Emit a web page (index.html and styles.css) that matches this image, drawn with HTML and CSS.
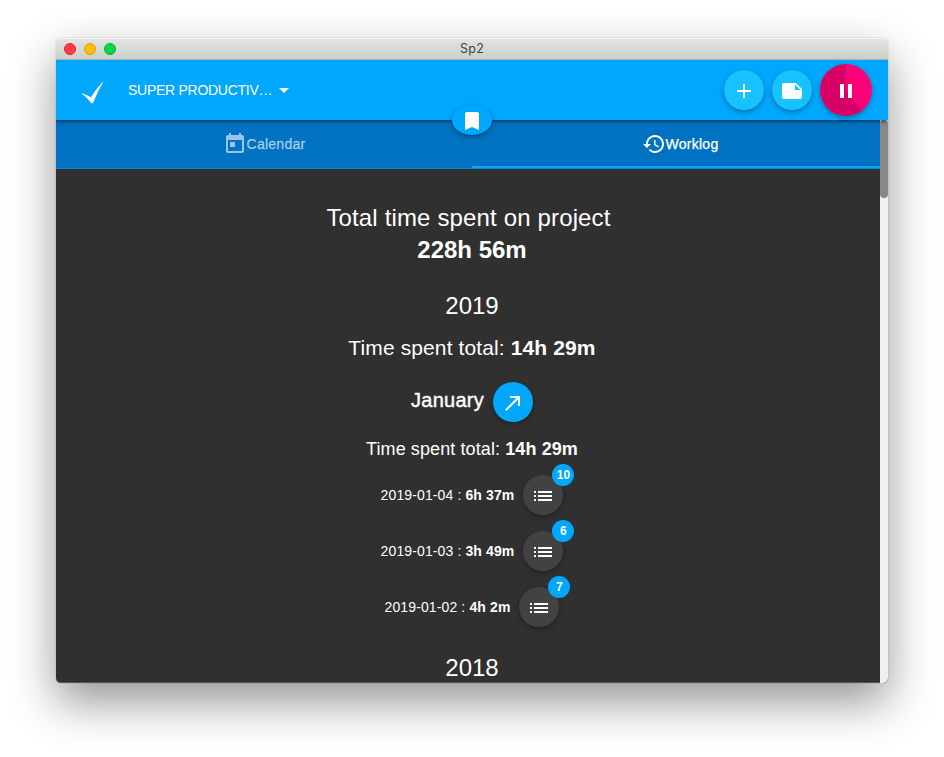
FILE: index.html
```html
<!DOCTYPE html>
<html lang="en">
<head>
<meta charset="utf-8">
<title>Sp2</title>
<link rel="stylesheet" href="styles.css">
</head>
<body>
<div class="window">
  <div class="titlebar">
    <div class="lights"><i class="light red"></i><i class="light yellow"></i><i class="light green"></i></div>
    <span class="window-title">Sp2</span>
  </div>
  <header class="header">
    <svg class="logo" viewBox="0 0 24 24"><path d="M.7 12.800Q6 14.500 11 17.200Q16.500 8 23.700.700Q18 11 12.900 23.200H11.400Q6.500 16.500.700 12.800Z"/></svg>
    <button class="project"><span>SUPER PRODUCTIV…</span><i class="caret"></i></button>
    <div class="actions">
      <button class="fab light-blue"><svg class="icon" viewBox="0 0 24 24"><path d="M19 13h-6v6h-2v-6H5v-2h6V5h2v6h6v2z"/></svg></button>
      <button class="fab light-blue"><svg class="icon" viewBox="0 0 24 24"><path d="M22 10l-6-6H4c-1.100 0-2 .900-2 2v12.010c0 1.100.900 1.990 2 1.990l16-.010c1.100 0 2-.890 2-1.990v-8zm-7-4.500l5.500 5.500H15V5.500z"/></svg></button>
      <button class="fab pause"><svg class="icon" viewBox="0 0 24 24"><path d="M6 19h4V5H6v14zm8-14v14h4V5h-4z"/></svg></button>
    </div>
    <button class="bookmark"><svg class="icon" viewBox="0 0 24 24"><path d="M17 3H7c-1.100 0-1.990.900-1.990 2L5 21l7-3 7 3V5c0-1.100-.900-2-2-2z"/></svg></button>
  </header>
  <div class="page">
    <nav class="tabs">
      <a class="tab"><svg class="icon" viewBox="0 0 24 24"><path d="M19 3h-1V1h-2v2H8V1H6v2H5c-1.110 0-1.990.900-1.990 2L3 19c0 1.100.890 2 2 2h14c1.100 0 2-.900 2-2V5c0-1.100-.900-2-2-2zm0 16H5V8h14v11zM7 10h5v5H7z"/></svg><span>Calendar</span></a>
      <a class="tab active"><svg class="icon" viewBox="0 0 24 24"><path d="M13 3c-4.970 0-9 4.030-9 9H1l3.890 3.890.070.140L9 12H6c0-3.870 3.130-7 7-7s7 3.130 7 7-3.130 7-7 7c-1.930 0-3.680-.790-4.940-2.060l-1.420 1.420C8.270 19.990 10.510 21 13 21c4.970 0 9-4.030 9-9s-4.030-9-9-9zm-1 5v5l4.280 2.540.720-1.210-3.500-2.080V8H12z"/></svg><span>Worklog</span></a>
    </nav>
    <main class="worklog">
      <h1 class="total"><span class="total-label">Total time spent on project</span><b>228h 56m</b></h1>
      <h2 class="year">2019</h2>
      <p class="year-total">Time spent total: <b>14h 29m</b></p>
      <div class="month"><h3>January</h3><button class="fab blue"><svg class="icon" viewBox="0 0 24 24"><path d="M9 5v2h6.590L4 18.590 5.410 20 17 8.410V15h2V5z"/></svg></button></div>
      <p class="month-total">Time spent total: <b>14h 29m</b></p>
      <ul class="days">
        <li class="day"><span>2019-01-04 : <b>6h 37m</b></span><button class="fab grey"><svg class="icon" viewBox="0 0 24 24"><path d="M3 13h2v-2H3v2zm0 4h2v-2H3v2zm0-8h2V7H3v2zm4 4h14v-2H7v2zm0 4h14v-2H7v2zM7 7v2h14V7H7z"/></svg><em class="badge">10</em></button></li>
        <li class="day"><span>2019-01-03 : <b>3h 49m</b></span><button class="fab grey"><svg class="icon" viewBox="0 0 24 24"><path d="M3 13h2v-2H3v2zm0 4h2v-2H3v2zm0-8h2V7H3v2zm4 4h14v-2H7v2zm0 4h14v-2H7v2zM7 7v2h14V7H7z"/></svg><em class="badge">6</em></button></li>
        <li class="day"><span>2019-01-02 : <b>4h 2m</b></span><button class="fab grey"><svg class="icon" viewBox="0 0 24 24"><path d="M3 13h2v-2H3v2zm0 4h2v-2H3v2zm0-8h2V7H3v2zm4 4h14v-2H7v2zm0 4h14v-2H7v2zM7 7v2h14V7H7z"/></svg><em class="badge">7</em></button></li>
      </ul>
      <h2 class="year">2018</h2>
    </main>
    <div class="scrollbar"><div class="thumb"></div></div>
  </div>
</div>
</body>
</html>
```
FILE: styles.css
```css
* { box-sizing: border-box; }
body {
  margin: 0;
  height: 757px;
  padding: 38px 56px 0;
  overflow: hidden;
  background: #fff;
  color: #fff;
  font: 14px/20px "Liberation Sans", Arial, sans-serif;
}
h1, h2, h3, p, ul { margin: 0; padding: 0; font-weight: 400; list-style: none; }
button { border: 0; padding: 0; background: none; color: inherit; font: inherit; }
.window {
  display: flex;
  flex-direction: column;
  width: 832px;
  height: 645px;
  border-radius: 5px;
  box-shadow: 0 0 1px rgba(0, 0, 0, .5), 0 19px 46px rgba(0, 0, 0, .42);
}
.titlebar {
  display: grid;
  grid-template-columns: 1fr auto 1fr;
  align-items: center;
  height: 22px;
  padding: 0 8px;
  border-radius: 5px 5px 0 0;
  border-bottom: 1px solid #aeb0ae;
  background: linear-gradient(#e3e5e3, #cbcecb);
  box-shadow: inset 0 1px #f4f4f4;
}
.lights { display: flex; gap: 8px; }
.light { width: 12px; height: 12px; border-radius: 50%; border: 1px solid; }
.red { background: #ff3b47; border-color: #e8202f; }
.yellow { background: #ffbd00; border-color: #e0a000; }
.green { background: #00d742; border-color: #00b92f; }
.window-title { color: #444; font: 12.5px/20px Inter, sans-serif; letter-spacing: .3px; padding-top: 1px; }

.header {
  position: relative;
  z-index: 2;
  display: flex;
  align-items: center;
  height: 60px;
  padding: 0 16px 0 24px;
  background: #00a7fc;
  box-shadow: 0 1px 4px rgba(0, 0, 0, .65);
  clip-path: inset(0 0 -24px 0);
}
.logo { width: 24px; height: 24px; fill: #fff; margin-top: 3px; }
.project { display: flex; align-items: center; gap: 7px; margin-left: 24px; letter-spacing: -.27px; }
.caret { border: 5px solid transparent; border-top-color: #fff; border-bottom: 0; }
.actions { display: flex; align-items: center; gap: 8px; margin-left: auto; }
.icon { display: block; width: 24px; height: 24px; fill: currentColor; flex: none; }
.fab {
  position: relative;
  display: grid;
  place-items: center;
  width: 40px;
  height: 40px;
  padding-top: 2px;
  border-radius: 50%;
  box-shadow: 0 2px 5px rgba(0, 0, 0, .32);
}
.light-blue { background: #18c2ff; }
.blue { background: #00a7fc; }
.grey { background: #424242; }
.pause { width: 52px; height: 52px; background: conic-gradient(#ff0078 0 142deg, #d80067 142deg); }
.bookmark {
  position: absolute;
  left: 396px;
  top: 45px;
  display: grid;
  place-items: center;
  width: 40px;
  height: 30px;
  padding-top: 2px;
  border-radius: 50%;
  background: #00a7fc;
  box-shadow: 0 2px 5px rgba(0, 0, 0, .35);
}

.page {
  position: relative;
  flex: 1;
  min-height: 0;
  overflow: hidden;
  border-radius: 0 0 5px 5px;
  background: #303030;
  box-shadow: inset 0 -1px #555;
}
.tabs {
  display: grid;
  grid-template-columns: 1fr 1fr;
  height: 49px;
  background: #0072c1;
  border-bottom: 1px solid #1380c9;
}
.tab {
  display: flex;
  align-items: center;
  justify-content: center;
  height: 48px;
  color: rgba(255, 255, 255, .6);
  letter-spacing: .25px;
  -webkit-text-stroke: .25px;
}
.tab .icon { stroke: none; }
.tab.active { color: #fff; box-shadow: inset 0 -2px #00a7fc; }
.worklog { text-align: center; padding-top: 33px; }
.total { font-size: 24px; line-height: 32px; }
.total-label { display: block; padding-right: 7px; letter-spacing: .15px; }
.total b { display: block; }
.year { margin-top: 24px; font-size: 24px; line-height: 32px; }
.year-total { margin-top: 12px; font-size: 21px; line-height: 28px; letter-spacing: .12px; }
.month { display: flex; justify-content: center; gap: 9px; margin-top: 20px; }
.month h3 { padding-top: 4px; font-size: 20px; line-height: 28px; letter-spacing: .25px; -webkit-text-stroke: .4px; }
.month-total { margin-top: 15px; font-size: 18px; line-height: 24px; letter-spacing: .1px; }
.days { display: grid; gap: 16px; margin-top: 14px; }
.day { display: flex; align-items: center; justify-content: center; gap: 9px; height: 40px; letter-spacing: .12px; }
.days + .year { margin-top: 25px; }
.badge {
  position: absolute;
  top: -11px;
  right: -11px;
  width: 22px;
  height: 22px;
  border-radius: 50%;
  background: #00a7fc;
  font: bold 12px/22px "Liberation Sans", Arial, sans-serif;
  text-align: center;
}
.scrollbar { position: absolute; top: 0; right: 0; bottom: 0; width: 8px; background: #f0f0f0; }
.thumb { height: 78px; border-radius: 4px; background: #888; }
```
